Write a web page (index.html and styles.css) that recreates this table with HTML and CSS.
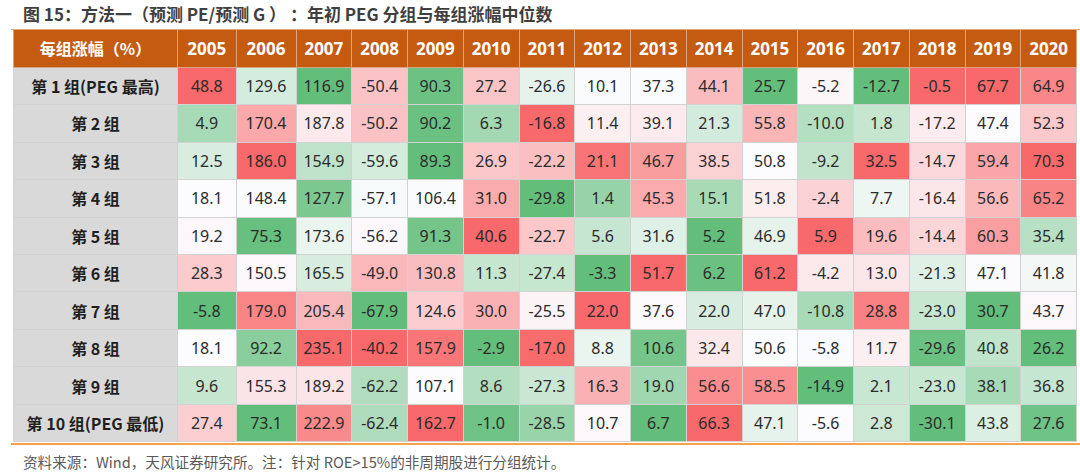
FILE: index.html
```html
<!DOCTYPE html>
<html lang="zh-CN">
<head>
<meta charset="utf-8">
<title>图 15</title>
<link rel="stylesheet" href="styles.css">
</head>
<body>
<div class="figure">
  <div class="title">图 15：方法一（预测 PE/预测 G ） ：年初 PEG 分组与每组涨幅中位数</div>
  <div class="frame">
    <table class="heat">
      <colgroup>
        <col class="c-label"><col class="c-2005"><col class="c-2006"><col span="14">
      </colgroup>
      <thead>
        <tr><th>每组涨幅（%）</th><th>2005</th><th>2006</th><th>2007</th><th>2008</th><th>2009</th><th>2010</th><th>2011</th><th>2012</th><th>2013</th><th>2014</th><th>2015</th><th>2016</th><th>2017</th><th>2018</th><th>2019</th><th>2020</th></tr>
      </thead>
      <tbody>
        <tr><td class="label">第 1 组(PEG 最高)</td><td>48.8</td><td>129.6</td><td>116.9</td><td>-50.4</td><td>90.3</td><td>27.2</td><td>-26.6</td><td>10.1</td><td>37.3</td><td>44.1</td><td>25.7</td><td>-5.2</td><td>-12.7</td><td>-0.5</td><td>67.7</td><td>64.9</td></tr>
        <tr><td class="label">第 2 组</td><td>4.9</td><td>170.4</td><td>187.8</td><td>-50.2</td><td>90.2</td><td>6.3</td><td>-16.8</td><td>11.4</td><td>39.1</td><td>21.3</td><td>55.8</td><td>-10.0</td><td>1.8</td><td>-17.2</td><td>47.4</td><td>52.3</td></tr>
        <tr><td class="label">第 3 组</td><td>12.5</td><td>186.0</td><td>154.9</td><td>-59.6</td><td>89.3</td><td>26.9</td><td>-22.2</td><td>21.1</td><td>46.7</td><td>38.5</td><td>50.8</td><td>-9.2</td><td>32.5</td><td>-14.7</td><td>59.4</td><td>70.3</td></tr>
        <tr><td class="label">第 4 组</td><td>18.1</td><td>148.4</td><td>127.7</td><td>-57.1</td><td>106.4</td><td>31.0</td><td>-29.8</td><td>1.4</td><td>45.3</td><td>15.1</td><td>51.8</td><td>-2.4</td><td>7.7</td><td>-16.4</td><td>56.6</td><td>65.2</td></tr>
        <tr><td class="label">第 5 组</td><td>19.2</td><td>75.3</td><td>173.6</td><td>-56.2</td><td>91.3</td><td>40.6</td><td>-22.7</td><td>5.6</td><td>31.6</td><td>5.2</td><td>46.9</td><td>5.9</td><td>19.6</td><td>-14.4</td><td>60.3</td><td>35.4</td></tr>
        <tr><td class="label">第 6 组</td><td>28.3</td><td>150.5</td><td>165.5</td><td>-49.0</td><td>130.8</td><td>11.3</td><td>-27.4</td><td>-3.3</td><td>51.7</td><td>6.2</td><td>61.2</td><td>-4.2</td><td>13.0</td><td>-21.3</td><td>47.1</td><td>41.8</td></tr>
        <tr><td class="label">第 7 组</td><td>-5.8</td><td>179.0</td><td>205.4</td><td>-67.9</td><td>124.6</td><td>30.0</td><td>-25.5</td><td>22.0</td><td>37.6</td><td>22.0</td><td>47.0</td><td>-10.8</td><td>28.8</td><td>-23.0</td><td>30.7</td><td>43.7</td></tr>
        <tr><td class="label">第 8 组</td><td>18.1</td><td>92.2</td><td>235.1</td><td>-40.2</td><td>157.9</td><td>-2.9</td><td>-17.0</td><td>8.8</td><td>10.6</td><td>32.4</td><td>50.6</td><td>-5.8</td><td>11.7</td><td>-29.6</td><td>40.8</td><td>26.2</td></tr>
        <tr><td class="label">第 9 组</td><td>9.6</td><td>155.3</td><td>189.2</td><td>-62.2</td><td>107.1</td><td>8.6</td><td>-27.3</td><td>16.3</td><td>19.0</td><td>56.6</td><td>58.5</td><td>-14.9</td><td>2.1</td><td>-23.0</td><td>38.1</td><td>36.8</td></tr>
        <tr><td class="label">第 10 组(PEG 最低)</td><td>27.4</td><td>73.1</td><td>222.9</td><td>-62.4</td><td>162.7</td><td>-1.0</td><td>-28.5</td><td>10.7</td><td>6.7</td><td>66.3</td><td>47.1</td><td>-5.6</td><td>2.8</td><td>-30.1</td><td>43.8</td><td>27.6</td></tr>
      </tbody>
    </table>
  </div>
  <div class="source">资料来源：Wind，天风证券研究所。注：针对 ROE&gt;15%的非周期股进行分组统计。</div>
</div>
<script src="script.js"></script>
</body>
</html>
```

FILE: styles.css
```css
html, body {
  margin: 0;
  padding: 0;
  background: #ffffff;
}

.figure {
  width: 1080px;
  font-family: "Noto Sans CJK SC", sans-serif;
}

.title {
  height: 29px;
  padding-left: 23px;
  font-size: 17px;
  font-weight: bold;
  line-height: 27px;
  color: #3f3f3f;
  white-space: nowrap;
}

.frame {
  margin-left: 11px;
  padding: 0 0 1px 2px;
  border-top: 1px solid #e2a878;
  border-bottom: 2px solid #f5a24a;
}

.heat {
  border-collapse: collapse;
  table-layout: fixed;
  width: 1064px;
}

.c-label { width: 164px; }
.c-2005 { width: 58.5px; }
.c-2006 { width: 60px; }

.heat thead tr { height: 37.3px; }
.heat tbody tr { height: 37.45px; }

.heat th {
  background: #c55a11;
  color: #ffffff;
  font-family: "Noto Sans", "Noto Sans CJK SC", sans-serif;
  font-size: 17px;
  font-weight: bold;
  text-align: center;
  padding: 0;
  border: 1px solid #d9a583;
  border-top: none;
}

.heat th:first-child {
  font-family: "Noto Sans CJK SC", sans-serif;
  font-size: 16px;
}

.heat td {
  padding: 0;
  text-align: center;
  font-family: "Noto Sans", sans-serif;
  font-size: 16px;
  color: #2b2b2b;
  border: 1px solid #d2d2d2;
  background: #fcfcff;
}

.heat td.label {
  background: #d9d9d9;
  font-family: "Noto Sans CJK SC", sans-serif;
  font-weight: bold;
  font-size: 16px;
  color: #1f1f1f;
  white-space: nowrap;
}

.source {
  padding-left: 23px;
  height: 29px;
  font-size: 14.6px;
  line-height: 34px;
  color: #595959;
  white-space: nowrap;
}
```

FILE: script.js
```js
(function () {
  var rows = document.querySelectorAll('.heat tbody tr');
  var GREEN = [99, 190, 123], WHITE = [252, 252, 255], RED = [248, 105, 107];
  function mix(a, b, t) {
    return 'rgb(' + a.map(function (v, i) { return Math.round(v + (b[i] - v) * t); }).join(',') + ')';
  }
  var nCols = rows[0].cells.length;
  for (var c = 1; c < nCols; c++) {
    var cells = [], vals = [];
    for (var r = 0; r < rows.length; r++) {
      var cell = rows[r].cells[c];
      cells.push(cell);
      vals.push(parseFloat(cell.textContent));
    }
    var s = vals.slice().sort(function (a, b) { return a - b; });
    var min = s[0], max = s[s.length - 1];
    var pos = (s.length - 1) * 0.5, lo = Math.floor(pos), hi = Math.ceil(pos);
    var mid = s[lo] + (s[hi] - s[lo]) * (pos - lo);
    cells.forEach(function (cell, i) {
      var v = vals[i], col;
      if (v <= mid) col = mix(GREEN, WHITE, mid === min ? 1 : (v - min) / (mid - min));
      else col = mix(WHITE, RED, max === mid ? 0 : (v - mid) / (max - mid));
      cell.style.backgroundColor = col;
    });
  }
})();
```
